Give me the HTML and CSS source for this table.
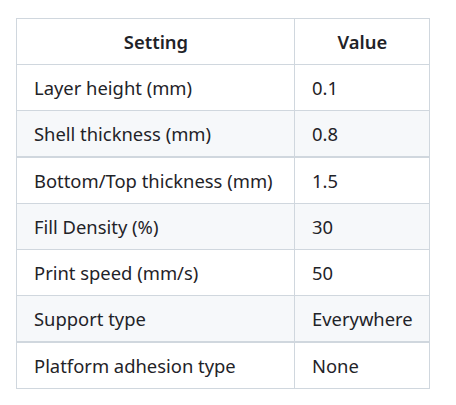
FILE: index.html
```html
<!DOCTYPE html>
<html>
<head>
<meta charset="utf-8">
<link rel="stylesheet" href="styles.css">
</head>
<body>
<table class="settings">
  <thead>
    <tr><th class="col-setting">Setting</th><th class="col-value">Value</th></tr>
  </thead>
  <tbody>
    <tr><td>Layer height (mm)</td><td>0.1</td></tr>
    <tr class="alt thick"><td>Shell thickness (mm)</td><td>0.8</td></tr>
    <tr><td>Bottom/Top thickness (mm)</td><td>1.5</td></tr>
    <tr class="alt"><td>Fill Density (%)</td><td>30</td></tr>
    <tr><td>Print speed (mm/s)</td><td>50</td></tr>
    <tr class="alt thick"><td>Support type</td><td>Everywhere</td></tr>
    <tr><td>Platform adhesion type</td><td>None</td></tr>
  </tbody>
</table>
</body>
</html>
```
FILE: styles.css
```css
html, body {
  margin: 0;
  background: #ffffff;
}
body {
  padding: 18px 16px;
  font-family: "Noto Sans", "Open Sans", sans-serif;
  font-size: 18.4px;
  color: #1f2328;
}
.settings {
  border-collapse: separate;
  border-spacing: 0;
  border-top: 1px solid #d0d7de;
  border-left: 1px solid #d0d7de;
}
.settings th,
.settings td {
  height: 45px;
  padding: 0 16px 0 17px;
  box-sizing: content-box;
  border-right: 1px solid #d0d7de;
  border-bottom: 1px solid #d0d7de;
  text-align: left;
  vertical-align: middle;
  line-height: 26px;
  white-space: nowrap;
}
.settings th {
  text-align: center;
  font-weight: 600;
}
.col-setting {
  width: 244px;
}
.col-value {
  width: 100px;
}
.alt {
  background: #f6f8fa;
}
.thick td {
  border-bottom-width: 2px;
}
```
